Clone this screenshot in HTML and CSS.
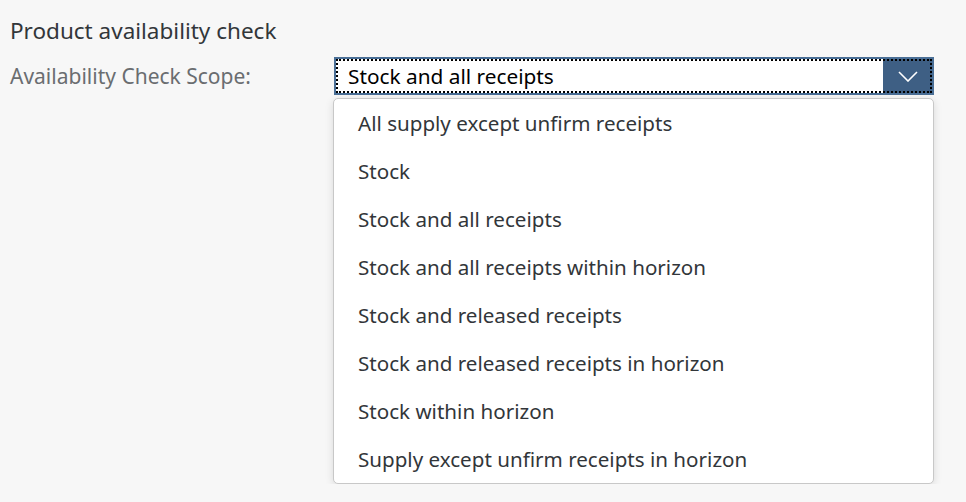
FILE: index.html
```html
<!DOCTYPE html>
<html lang="en">
<head>
    <meta charset="UTF-8">
    <title>Product availability check</title>
    <link rel="stylesheet" href="styles.css">
</head>
<body>

    <h2 class="title">Product availability check</h2>

    <div class="row">
        <label class="label">Availability Check Scope:</label>
        <div class="field-wrap">
            <div class="select">
                <div class="select-inner">
                    <span class="value">Stock and all receipts</span>
                    <span class="arrow">
                        <svg width="20" height="11" viewBox="0 0 20 11">
                            <polyline points="1,1 10,10 19,1" fill="none" stroke="#fff" stroke-width="1.6"/>
                        </svg>
                    </span>
                </div>
            </div>
            <ul class="list">
                <li>All supply except unfirm receipts</li>
                <li>Stock</li>
                <li>Stock and all receipts</li>
                <li>Stock and all receipts within horizon</li>
                <li>Stock and released receipts</li>
                <li>Stock and released receipts in horizon</li>
                <li>Stock within horizon</li>
                <li>Supply except unfirm receipts in horizon</li>
            </ul>
        </div>
    </div>

</body>
</html>
```

FILE: styles.css
```css
body {
    font-family: "Noto Sans", Arial, sans-serif;
    background-color: #f7f7f7;
    color: #32363a;
    margin: 0;
    padding: 17px 10px 0;
}
.title {
    font-size: 22.5px;
    font-weight: normal;
    margin: 0;
    line-height: 28px;
}
.row {
    display: flex;
    margin-top: 12px;
}
.label {
    width: 324px;
    font-size: 21px;
    line-height: 38px;
    color: #6a6d70;
}
.field-wrap {
    width: 600px;
}
.select {
    height: 38px;
    border: 2px solid #4a6f96;
    background: #fff;
    box-sizing: border-box;
}
.select-inner {
    display: flex;
    height: 100%;
    outline: 2px dotted #000;
    outline-offset: -2px;
}
.value {
    flex: 1;
    font-size: 20.8px;
    line-height: 34px;
    padding-left: 12px;
    color: #000;
}
.arrow {
    width: 49px;
    background: #3e5f84;
    display: flex;
    align-items: center;
    justify-content: center;
}
.list {
    list-style: none;
    margin: 3px 0 0 -1px;
    padding: 0;
    background: #fff;
    border: 1px solid #c8c8c8;
    border-radius: 5px;
    box-shadow: 0 2px 8px rgba(0, 0, 0, 0.12);
}
.list li {
    height: 48px;
    line-height: 48px;
    padding-left: 24px;
    font-size: 20.6px;
    color: #32363a;
}
```
